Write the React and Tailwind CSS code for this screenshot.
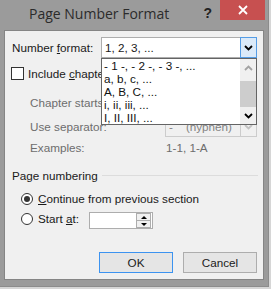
import React from 'react';

const BODY_FONT = { fontFamily: '"Liberation Sans", Arial, sans-serif' };
const TITLE_FONT = { fontFamily: '"Open Sans", "Noto Sans", sans-serif' };

function Chevron({ className = '', up = false }) {
    return (
        <svg width="9" height="6" viewBox="0 0 9 6" className={className}>
            <path
                d={up ? 'M1 5 L4.5 1.5 L8 5' : 'M1 1 L4.5 4.5 L8 1'}
                fill="none"
                stroke="currentColor"
                strokeWidth="1.8"
            />
        </svg>
    );
}

function DropList() {
    const items = ['- 1 -, - 2 -, - 3 -, ...', 'a, b, c, ...', 'A, B, C, ...', 'i, ii, iii, ...', 'I, II, III, ...'];
    return (
        <div className="absolute left-[-1px] top-[20px] z-10 flex h-[67px] w-[156px] border border-[#646464] bg-white">
            <div className="flex-1 overflow-hidden pl-[2px]">
                {items.map((item) => (
                    <div key={item} className="h-[13px] whitespace-nowrap leading-[13px] text-[#111]">
                        {item}
                    </div>
                ))}
            </div>
            <div className="flex w-[16px] flex-col items-center bg-[#f0f0f0]">
                <div className="flex h-[17px] items-center justify-center text-[#a3a3a3]">
                    <Chevron up />
                </div>
                <div className="mt-[5px] h-[26px] w-full bg-[#cdcdcd]" />
                <div className="flex flex-1 items-center justify-center text-black">
                    <Chevron />
                </div>
            </div>
        </div>
    );
}

function DisabledCombo({ children }) {
    return (
        <div className="flex h-[21px] w-[92px] items-center border border-[#cccccc] bg-[#f0f0f0] text-[#838383]">
            <div className="flex-1 pl-[3px] whitespace-nowrap">{children}</div>
            <div className="flex h-full w-[16px] items-center justify-center border-l border-[#cccccc] text-[#c2c2c2]">
                <Chevron />
            </div>
        </div>
    );
}

export default function App() {
    return (
        <div className="h-[289px] w-[271px] bg-[#d6d6d6]" style={BODY_FONT}>
            <div className="flex h-[287px] w-[269px] flex-col border-r border-b border-[#8c8c8c] bg-[#9b9b9b]">
                {/* title bar */}
                <div className="flex h-[30px] shrink-0 items-start">
                    <div className="flex-1 pl-[29px] pt-[4px] text-[14px] leading-[20px] text-[#2b2b2b]" style={TITLE_FONT}>
                        Page Number Format
                    </div>
                    <div className="mr-[8px] pt-[4px] text-[14px] font-bold leading-[18px] text-[#222]">?</div>
                    <div className="mr-[3px] flex h-[20px] w-[45px] items-center justify-center bg-[#c75050]">
                        <svg width="10" height="10" viewBox="0 0 10 10">
                            <path d="M1 1 L9 9 M9 1 L1 9" stroke="white" strokeWidth="1.8" />
                        </svg>
                    </div>
                </div>

                {/* dialog body */}
                <div className="mx-[4px] flex h-[250px] flex-col border border-[#858585] bg-[#f0f0f0] text-[11.7px] text-[#1a1a1a]">
                    {/* number format */}
                    <div className="mt-[6px] flex h-[21px] items-center">
                        <div className="w-[96px] pl-[7px] whitespace-nowrap">
                            Number <span className="underline">f</span>ormat:
                        </div>
                        <div className="relative flex h-[21px] w-[156px] items-center border border-[#adadad] bg-white">
                            <div className="flex-1 pl-[3px]">1, 2, 3, ...</div>
                            <div className="-my-px -mr-px flex h-[21px] w-[17px] items-center justify-center border border-[#569de5] bg-[#dbeaf9] text-black">
                                <Chevron />
                            </div>
                            <DropList />
                        </div>
                    </div>

                    {/* include chapter number */}
                    <div className="mt-[9px] flex h-[13px] items-center pl-[6px]">
                        <div className="h-[13px] w-[13px] border border-[#333] bg-white" />
                        <div className="pl-[4px] whitespace-nowrap">
                            Include <span className="underline">c</span>hapter number
                        </div>
                    </div>

                    {/* chapter starts with style */}
                    <div className="mt-[12px] flex h-[21px] items-center text-[#6d6d6d]">
                        <div className="w-[160px] pl-[25px] whitespace-nowrap">Chapter starts with style:</div>
                        <DisabledCombo>Heading 1</DisabledCombo>
                    </div>

                    {/* separator */}
                    <div className="mt-[3px] flex h-[21px] items-center text-[#6d6d6d]">
                        <div className="w-[160px] pl-[25px] whitespace-nowrap">Use separator:</div>
                        <DisabledCombo>-&nbsp;&nbsp;&nbsp;&nbsp;(hyphen)</DisabledCombo>
                    </div>

                    {/* examples */}
                    <div className="flex h-[21px] items-center text-[#6d6d6d]">
                        <div className="w-[161px] pl-[25px]">Examples:</div>
                        <div>1-1, 1-A</div>
                    </div>

                    {/* page numbering group */}
                    <div className="mt-[7px] flex h-[21px] items-center">
                        <div className="w-[97px] pl-[7px] whitespace-nowrap">Page numbering</div>
                        <div className="mr-[5px] h-px flex-1 bg-[#dcdcdc]" />
                    </div>

                    <div className="mt-[5px] flex h-[16px] items-center pl-[16px]">
                        <div className="flex h-[12px] w-[12px] items-center justify-center rounded-full border border-[#333] bg-white">
                            <div className="h-[6px] w-[6px] rounded-full bg-[#333]" />
                        </div>
                        <div className="pl-[5px] whitespace-nowrap">
                            <span className="underline">C</span>ontinue from previous section
                        </div>
                    </div>

                    <div className="mt-[5px] flex h-[17px] items-start pl-[16px]">
                        <div className="mt-[1px] h-[12px] w-[12px] rounded-full border border-[#333] bg-white" />
                        <div className="w-[56px] pl-[5px] leading-[14px] whitespace-nowrap">
                            Start <span className="underline">a</span>t:
                        </div>
                        <div className="flex h-[17px] w-[64px] border border-[#adadad] bg-white">
                            <div className="flex-1" />
                            <div className="mr-px flex w-[15px] flex-col">
                                <div className="flex flex-1 items-center justify-center border border-[#adadad] bg-[#f0f0f0]">
                                    <div className="h-0 w-0 border-x-[3px] border-b-[3px] border-x-transparent border-b-black" />
                                </div>
                                <div className="flex flex-1 items-center justify-center border border-t-0 border-[#adadad] bg-[#f0f0f0]">
                                    <div className="h-0 w-0 border-x-[3px] border-t-[3px] border-x-transparent border-t-black" />
                                </div>
                            </div>
                        </div>
                    </div>

                    {/* buttons */}
                    <div className="mt-[23px] flex justify-end gap-[10px] pr-[6px]">
                        <div className="flex h-[21px] w-[74px] items-center justify-center border border-[#3c93f0] bg-[#e5e5e5]">
                            OK
                        </div>
                        <div className="flex h-[21px] w-[74px] items-center justify-center border border-[#adadad] bg-[#e5e5e5]">
                            Cancel
                        </div>
                    </div>
                </div>
            </div>
        </div>
    );
}
